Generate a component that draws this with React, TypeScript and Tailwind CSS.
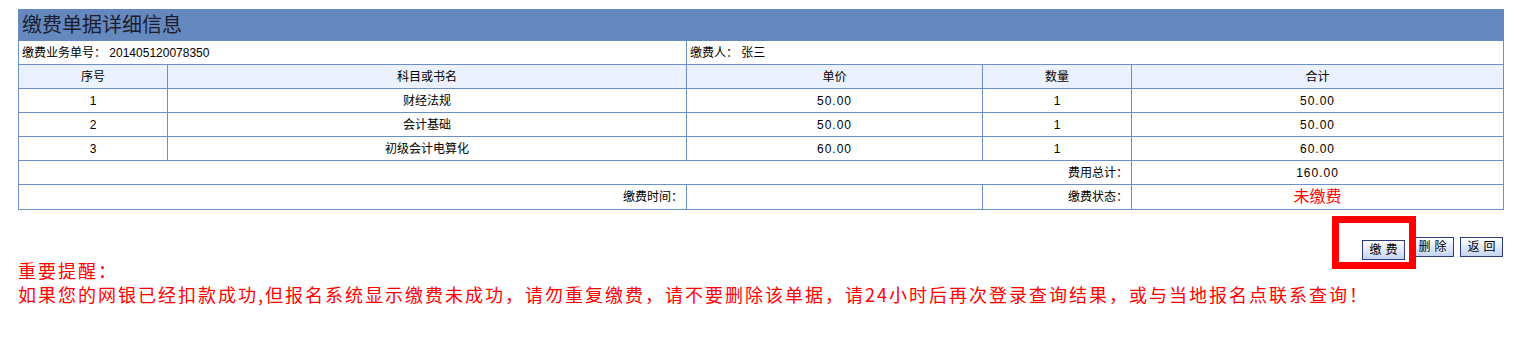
import React from 'react'

const items = [
  { no: '1', name: '财经法规', price: '50.00', qty: '1', total: '50.00' },
  { no: '2', name: '会计基础', price: '50.00', qty: '1', total: '50.00' },
  { no: '3', name: '初级会计电算化', price: '60.00', qty: '1', total: '60.00' },
]

const font = { fontFamily: '"Liberation Sans", "Noto Sans CJK SC", sans-serif' }
const cell = 'border border-[#6c8fc9] h-[24px] p-0 px-[3px] text-[12px] text-black'

function Btn({ label }: { label: string }) {
  return (
    <button
      className="w-[43px] h-[20px] border border-[#2c3c7c] bg-gradient-to-b from-white to-[#c4d4f2] text-[12px] text-black tracking-[4px] pl-[4px] leading-none"
      style={font}
    >
      {label}
    </button>
  )
}

export default function App() {
  return (
    <div className="bg-white w-[1527px] h-[362px] pt-[9px] pl-[18px]" style={font}>
      <table className="w-[1485px] table-fixed border-collapse">
        <colgroup>
          <col className="w-[149px]" />
          <col className="w-[519px]" />
          <col className="w-[296px]" />
          <col className="w-[149px]" />
          <col className="w-[372px]" />
        </colgroup>
        <tbody>
          <tr>
            <td
              colSpan={5}
              className="bg-[#6589be] h-[31px] border border-[#6589be] px-[3px] text-[20px] text-[#1c1c2c] leading-none"
            >
              缴费单据详细信息
            </td>
          </tr>
          <tr>
            <td colSpan={2} className={cell + ' text-left'}>缴费业务单号： 201405120078350</td>
            <td colSpan={3} className={cell + ' text-left'}>缴费人： 张三</td>
          </tr>
          <tr className="bg-[#ebf2fd]">
            <td className={cell + ' text-center'}>序号</td>
            <td className={cell + ' text-center'}>科目或书名</td>
            <td className={cell + ' text-center'}>单价</td>
            <td className={cell + ' text-center'}>数量</td>
            <td className={cell + ' text-center'}>合计</td>
          </tr>
          {items.map((it) => (
            <tr key={it.no}>
              <td className={cell + ' text-center'}>{it.no}</td>
              <td className={cell + ' text-center'}>{it.name}</td>
              <td className={cell + ' text-center tracking-[1px]'}>{it.price}</td>
              <td className={cell + ' text-center'}>{it.qty}</td>
              <td className={cell + ' text-center tracking-[1px]'}>{it.total}</td>
            </tr>
          ))}
          <tr>
            <td colSpan={4} className={cell + ' text-right'}>费用总计：</td>
            <td className={cell + ' text-center tracking-[1px]'}>160.00</td>
          </tr>
          <tr>
            <td colSpan={2} className={cell + ' text-right'}>缴费时间：</td>
            <td className={cell}></td>
            <td className={cell + ' text-right'}>缴费状态：</td>
            <td className={cell + ' text-center !text-[16px] !text-[#ff0000]'}>未缴费</td>
          </tr>
        </tbody>
      </table>

      <div className="w-[1485px] mt-[27px] flex justify-end gap-[6px]">
        <span className="relative">
          <Btn label="缴费" />
          <span className="absolute -left-[30px] -top-[21px] w-[84px] h-[53px] border-[7px] border-[#ff0000] z-10 pointer-events-none" />
        </span>
        <Btn label="删除" />
        <Btn label="返回" />
      </div>

      <div
        className="text-[#ff0000] text-[18px] leading-[24px] tracking-[2px] -mt-[3px]"
        style={{ fontFamily: '"Noto Sans CJK SC", "Liberation Sans", sans-serif' }}
      >
        <p>重要提醒：</p>
        <p>如果您的网银已经扣款成功,但报名系统显示缴费未成功，请勿重复缴费，请不要删除该单据，请24小时后再次登录查询结果，或与当地报名点联系查询！</p>
      </div>
    </div>
  )
}
